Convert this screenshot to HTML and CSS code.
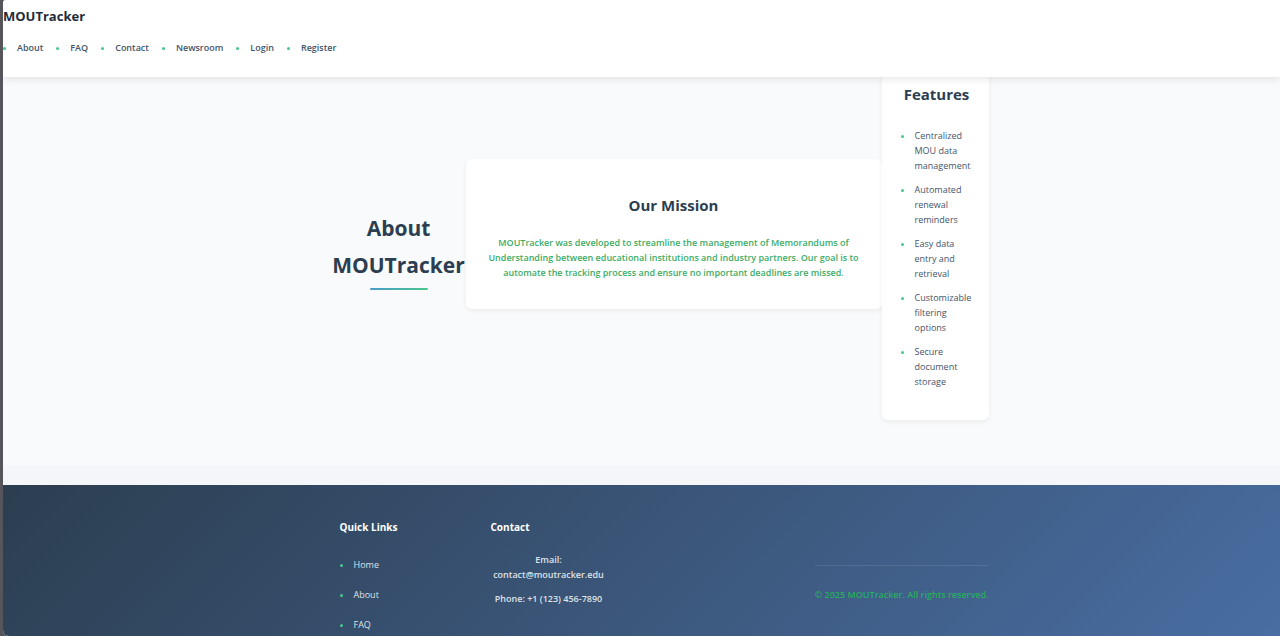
FILE: index.html
```html
<!DOCTYPE html>
<html lang="en">
<head>
<meta charset="utf-8">
<meta name="viewport" content="width=device-width, initial-scale=1">
<title>About - MOUTracker</title>
<link rel="stylesheet" href="styles.css">
</head>
<body>
<div class="page">
  <header class="header">
    <div class="brand">MOUTracker</div>
    <nav>
      <ul class="nav">
        <li><a href="#about">About</a></li>
        <li><a href="#faq">FAQ</a></li>
        <li><a href="#contact">Contact</a></li>
        <li><a href="#newsroom">Newsroom</a></li>
        <li><a href="#login">Login</a></li>
        <li><a href="#register">Register</a></li>
      </ul>
    </nav>
  </header>
  <main class="main" id="about">
    <div class="about">
      <h1 class="title">About MOUTracker</h1>
      <section class="card mission">
        <h2>Our Mission</h2>
        <p>MOUTracker was developed to streamline the management of Memorandums of Understanding between educational institutions and industry partners. Our goal is to automate the tracking process and ensure no important deadlines are missed.</p>
      </section>
      <section class="card features">
        <h2>Features</h2>
        <ul>
          <li>Centralized MOU data management</li>
          <li>Automated renewal reminders</li>
          <li>Easy data entry and retrieval</li>
          <li>Customizable filtering options</li>
          <li>Secure document storage</li>
        </ul>
      </section>
    </div>
  </main>
  <footer class="footer">
    <div class="footer-inner">
      <section class="links">
        <h3>Quick Links</h3>
        <ul>
          <li><a href="#home">Home</a></li>
          <li><a href="#about">About</a></li>
          <li><a href="#faq">FAQ</a></li>
        </ul>
      </section>
      <section class="contact" id="contact">
        <h3>Contact</h3>
        <p>Email: contact@moutracker.edu</p>
        <p>Phone: +1 (123) 456-7890</p>
      </section>
      <p class="copyright">© 2025 MOUTracker. All rights reserved.</p>
    </div>
  </footer>
</div>
</body>
</html>
```
FILE: styles.css
```css
* {
  box-sizing: border-box;
}

body {
  margin: 0;
  background: #55555b;
  color: #44546a;
  font-family: "Open Sans", "Noto Sans", sans-serif;
  font-size: 9px;
  line-height: 15px;
}

h1, h2, h3, p, ul {
  margin: 0;
  padding: 0;
}

ul {
  list-style: none;
}

a {
  color: inherit;
  text-decoration: none;
}

li {
  display: flex;
}

li::before {
  content: "";
  flex: none;
  width: 3px;
  height: 3px;
  margin: 7px 11px 0 0;
  border-radius: 50%;
  background: #48c78e;
}

.page {
  display: flex;
  flex-direction: column;
  height: 100vh;
  margin-left: 3px;
  overflow: hidden;
  border-radius: 3px 0 0 6px;
  background: #f4f6fa;
}

.header {
  position: relative;
  z-index: 1;
  flex: none;
  padding: 6px 0 22px;
  background: #fff;
  box-shadow: 0 2px 8px rgba(0, 0, 0, 0.1);
}

.brand {
  color: #232b3b;
  font-size: 13px;
  font-weight: 700;
  line-height: 20px;
}

.nav {
  display: flex;
  gap: 13px;
  padding-top: 14px;
  color: #43566a;
  font-weight: 600;
}

.main {
  flex: none;
  padding: 0 0 45px 37px;
  background: #f8fafc;
}

.about {
  display: flex;
  align-items: center;
  width: 657px;
  max-width: 100%;
  margin: -29px auto 0;
}

.title {
  display: flex;
  flex-direction: column;
  align-items: center;
  flex: 0 0 134px;
  padding-top: 32px;
  color: #2c3e50;
  font-size: 21px;
  font-weight: 700;
  line-height: 37px;
  text-align: center;
}

.title::after {
  content: "";
  width: 58px;
  height: 2px;
  margin-top: 4px;
  border-radius: 1px;
  background: linear-gradient(90deg, #4a9cc9, #48c78e);
}

.card {
  border-radius: 6px;
  background: #fff;
  box-shadow: 0 2px 5px rgba(0, 0, 0, 0.06);
}

.card h2 {
  color: #2c3e50;
  font-size: 15px;
  font-weight: 700;
  line-height: 26px;
  text-align: center;
}

.mission {
  flex: 1;
  padding: 33px 20px 29px;
}

.mission p {
  padding-top: 17px;
  color: #3cac65;
  font-weight: 600;
  text-align: center;
}

.features {
  flex: 0 0 107px;
  padding: 33px 16px 31px 19px;
}

.features ul {
  display: grid;
  gap: 9px;
  padding-top: 21px;
}

.footer {
  flex: none;
  margin-top: 20px;
  padding: 32px 0 32px 37px;
  background: linear-gradient(135deg, #2c3e50, #4a6fa5);
  color: #dde2e8;
}

.footer-inner {
  display: flex;
  width: 657px;
  max-width: 100%;
  margin: 0 auto;
  padding-left: 8px;
}

.footer h3 {
  color: #fff;
  font-size: 10px;
  font-weight: 700;
  line-height: 20px;
}

.links {
  flex: 0 0 151px;
}

.links ul {
  display: grid;
  gap: 15px;
  padding: 20px 0 24px;
}

.contact {
  display: grid;
  align-content: start;
  gap: 9px;
  flex: 0 0 116px;
  font-weight: 600;
}

.contact h3 {
  margin-bottom: 6px;
}

.contact p {
  text-align: center;
}

.copyright {
  align-self: flex-start;
  margin: 48px 0 0 auto;
  padding-top: 21px;
  border-top: 1px solid rgba(255, 255, 255, 0.1);
  color: #27ae60;
  font-weight: 600;
}
```
